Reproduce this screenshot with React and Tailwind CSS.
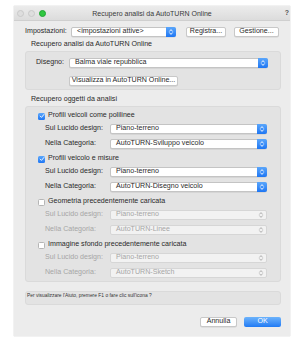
import React from "react";

const FONT = "font-['Liberation_Sans',Arial,sans-serif]";

function Chevrons({ color }) {
  return (
    <svg width="6" height="8" viewBox="0 0 6 8">
      <path d="M1.6 3.2 L3 1.6 L4.4 3.2 M1.6 4.8 L3 6.4 L4.4 4.8" stroke={color} strokeWidth="0.9" fill="none" strokeLinecap="round" strokeLinejoin="round" />
    </svg>
  );
}

function Popup({ text, className = "", disabled }) {
  if (disabled) {
    return (
      <div className={`flex h-[10px] items-center rounded-[2px] border border-[#d6d6d6] bg-[#f2f2f2] ${className}`}>
        <span className="flex-1 truncate pl-[5px] text-[7.1px] leading-none text-[#a6a6a6]">{text}</span>
        <div className="flex h-full w-[10px] items-center justify-center">
          <Chevrons color="#a8a8a8" />
        </div>
      </div>
    );
  }
  return (
    <div className={`flex h-[10px] items-center rounded-[2px] border border-[#c4c4c4] bg-white shadow-[0_0.5px_0.5px_rgba(0,0,0,0.12)] ${className}`}>
      <span className="flex-1 truncate pl-[5px] text-[7.1px] leading-none text-[#2a2a2a]">{text}</span>
      <div className="-my-px -mr-px flex h-[10px] w-[10px] items-center justify-center rounded-r-[2px] bg-gradient-to-b from-[#5aa6fb] to-[#1d76f3]">
        <Chevrons color="#ffffff" />
      </div>
    </div>
  );
}

function Button({ children, className = "" }) {
  return (
    <div className={`flex h-[10px] items-center justify-center rounded-[2px] border border-[#c8c8c8] bg-white text-[7.1px] leading-none text-[#2a2a2a] shadow-[0_0.5px_0.5px_rgba(0,0,0,0.12)] ${className}`}>
      {children}
    </div>
  );
}

function Checkbox({ checked }) {
  if (checked) {
    return (
      <div className="flex h-[7px] w-[7px] items-center justify-center rounded-[1.5px] bg-gradient-to-b from-[#5aa6fb] to-[#1d76f3]">
        <svg width="6" height="6" viewBox="0 0 6 6">
          <path d="M1.2 3.1 L2.5 4.4 L4.9 1.5" stroke="#fff" strokeWidth="0.9" fill="none" strokeLinecap="round" strokeLinejoin="round" />
        </svg>
      </div>
    );
  }
  return <div className="h-[7px] w-[7px] rounded-[1.5px] border border-[#b5b5b5] bg-white" />;
}

function Group({ label, checked, cat1, cat2, disabled }) {
  const lab = disabled ? "text-[#a6a6a6]" : "text-[#2a2a2a]";
  return (
    <div className="flex flex-col">
      <div className="flex h-[10px] items-center pl-[12px]">
        <Checkbox checked={checked} />
        <span className="ml-[3px] text-[7.1px] leading-none text-[#2a2a2a]">{label}</span>
      </div>
      <div className="mt-[3px] flex h-[10px] items-center pl-[19px] pr-[13px]">
        <span className={`w-[65px] text-[7.1px] leading-none ${lab}`}>Sul Lucido design:</span>
        <Popup text={cat1} disabled={disabled} className="flex-1" />
      </div>
      <div className="mt-[5px] flex h-[10px] items-center pl-[19px] pr-[13px]">
        <span className={`w-[65px] text-[7.1px] leading-none ${lab}`}>Nella Categoria:</span>
        <Popup text={cat2} disabled={disabled} className="flex-1" />
      </div>
    </div>
  );
}

export default function App() {
  return (
    <div className={`h-[344px] w-[306px] overflow-hidden bg-white pt-[6px] pl-[14px] ${FONT}`}>
      <div className="flex h-[330px] w-[276px] flex-col bg-[#ececec] shadow-[0_0_1px_rgba(0,0,0,0.3)]">
        {/* Title bar */}
        <div className="relative flex h-[15px] items-center border-b border-[#cfcfcf] bg-gradient-to-b from-[#ececec] to-[#dcdcdc]">
          <div className="ml-[3px] flex items-center gap-[4px]">
            <div className="h-[7px] w-[7px] rounded-full border border-[#c9c9c9] bg-[#dedede]" />
            <div className="h-[7px] w-[7px] rounded-full border border-[#c9c9c9] bg-[#dedede]" />
            <div className="h-[7px] w-[7px] rounded-full border border-[#20a533] bg-[#2fc740]" />
          </div>
          <div className="absolute inset-0 flex items-center justify-center text-[7px] leading-none text-[#3a3a3a]">
            Recupero analisi da AutoTURN Online
          </div>
          <div className="absolute right-[1px] top-[3px] text-[7px] font-bold leading-none text-[#555]">?</div>
        </div>

        <div className="flex flex-1 flex-col pl-[11px] pr-[9px]">
          {/* Impostazioni row */}
          <div className="mt-[6px] flex h-[10px] items-center">
            <span className="w-[46px] text-[7.1px] leading-none text-[#2a2a2a]">Impostazioni:</span>
            <Popup text="<impostazioni attive>" className="w-[105px]" />
            <Button className="ml-[10px] w-[40px]">Registra...</Button>
            <Button className="ml-[8px] w-[45px]">Gestione...</Button>
          </div>

          {/* Section 1 */}
          <div className="mt-[3px] flex h-[10px] items-center pl-[6px] text-[7.1px] leading-none text-[#2a2a2a]">
            Recupero analisi da AutoTURN Online
          </div>
          <div className="mt-[1px] flex h-[39px] flex-col rounded-[3px] border border-[#dadada] bg-[#e3e3e3] pt-[6px]">
            <div className="flex h-[10px] items-center pr-[12px]">
              <span className="ml-[10px] w-[33px] text-[7.1px] leading-none text-[#2a2a2a]">Disegno:</span>
              <Popup text="Balma viale repubblica" className="flex-1" />
            </div>
            <Button className="ml-[43px] mt-[8px] w-[109px]">Visualizza in AutoTURN Online...</Button>
          </div>

          {/* Section 2 */}
          <div className="mt-[5px] flex h-[10px] items-center pl-[6px] text-[7.1px] leading-none text-[#2a2a2a]">
            Recupero oggetti da analisi
          </div>
          <div className="mt-[1px] flex h-[176px] flex-col gap-[5px] rounded-[3px] border border-[#dadada] bg-[#e3e3e3] pt-[4px]">
            <Group label="Profili veicoli come polilinee" checked cat1="Piano-terreno" cat2="AutoTURN-Sviluppo veicolo" />
            <Group label="Profili veicolo e misure" checked cat1="Piano-terreno" cat2="AutoTURN-Disegno veicolo" />
            <Group label="Geometria precedentemente caricata" disabled cat1="Piano-terreno" cat2="AutoTURN-Linee" />
            <Group label="Immagine sfondo precedentemente caricata" disabled cat1="Piano-terreno" cat2="AutoTURN-Sketch" />
          </div>

          {/* Help box */}
          <div className="mt-[9px] h-[14px] rounded-[3px] border border-[#dadada] bg-[#e3e3e3] pl-[1px] pt-[1px] text-[4.9px] leading-[6px] text-[#333]">
            Per visualizzare l'Aiuto, premere F1 o fare clic sull'icona ?
          </div>

          {/* Buttons */}
          <div className="mt-[12px] flex h-[10px] justify-end gap-[7px]">
            <Button className="w-[37px]">Annulla</Button>
            <div className="flex h-[10px] w-[37px] items-center justify-center rounded-[2px] bg-gradient-to-b from-[#6cb3fb] to-[#1f7af4] text-[7.1px] leading-none text-white">
              OK
            </div>
          </div>
        </div>
      </div>
    </div>
  );
}
